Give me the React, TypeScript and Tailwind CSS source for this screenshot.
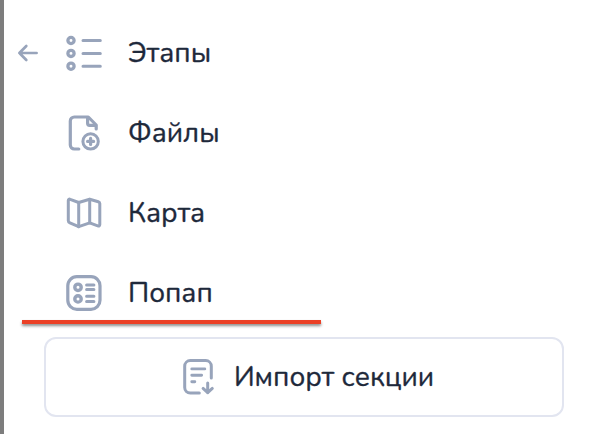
import type { ReactNode } from 'react';

// Outline icon wrapper, 40x40 grid
function Icon({ children }: { children: ReactNode }) {
  return (
    <svg
      viewBox="0 0 40 40"
      className="h-10 w-10 shrink-0 text-[#98a4bb]"
      fill="none"
      stroke="currentColor"
      strokeWidth="3.2"
      strokeLinecap="round"
      strokeLinejoin="round"
    >
      {children}
    </svg>
  );
}

const StepsIcon = () => (
  <Icon>
    <circle cx="7" cy="7.5" r="3.1" strokeWidth="3.3" />
    <circle cx="7" cy="20.4" r="3.1" strokeWidth="3.3" />
    <circle cx="7" cy="33.2" r="3.1" strokeWidth="3.3" />
    <path d="M19 7.5h17.3M19 20.4h17.3M19 33.2h17.3" strokeWidth="3" />
  </Icon>
);

const FileIcon = () => (
  <Icon>
    <path d="M14.8 36H10.3a4 4 0 0 1-4-4V8a4 4 0 0 1 4-4h14L32.2 12v4" />
    <path d="M23.6 4.5v5.8a2 2 0 0 0 2 2h6" />
    <circle cx="26.6" cy="28.4" r="7.7" strokeWidth="3" />
    <path d="M26.6 25.4v6M23.6 28.4h6" />
  </Icon>
);

const MapIcon = () => (
  <Icon>
    <path
      d="M4.3 7.4c0-1.2.9-1.6 1.9-1.1l8.5 3.2 11-3.2 8.6 2.5c1 .3 1.5.8 1.5 1.8v21c0 1.3-.9 1.7-2 1.3l-8.1-3-11 3.8-8.8-3.9c-1-.4-1.6-1-1.6-2z"
      strokeWidth="3"
    />
    <path d="M14.7 9.5v24.2M25.7 6.3v23.6" strokeWidth="3" />
  </Icon>
);

const PopupIcon = () => (
  <Icon>
    <rect x="3.8" y="3.7" width="32.2" height="32.6" rx="9" />
    <circle cx="14" cy="14.3" r="3.2" strokeWidth="3.4" />
    <circle cx="14" cy="25.9" r="3.2" strokeWidth="3.4" />
    <path d="M22.6 11.9h7.3M22.6 16.6h7.3M22.6 23.3h7.3M22.6 28.4h7.3" strokeWidth="3" />
  </Icon>
);

const ImportIcon = () => (
  <Icon>
    <path d="M21.3 36h-9a5.6 5.6 0 0 1-5.6-5.6V9.2a5.6 5.6 0 0 1 5.6-5.6h15.4a5.6 5.6 0 0 1 5.6 5.6v11.9" strokeWidth="3" />
    <path d="M13.8 11.9h13M13.8 18.2h9.8M13.8 24.7h3" strokeWidth="2.9" />
    <path d="M29.7 26v9.7M25.1 31.4l4.6 4.3 4.6-4.3" strokeWidth="3" />
  </Icon>
);

const sections = [
  { label: 'Этапы', icon: <StepsIcon /> },
  { label: 'Файлы', icon: <FileIcon /> },
  { label: 'Карта', icon: <MapIcon /> },
  { label: 'Попап', icon: <PopupIcon /> },
];

export default function App() {
  return (
    <div className="relative h-[434px] w-[604px] overflow-hidden border-l-4 border-[#7d7d7d] bg-white font-['Nunito','Noto_Sans',sans-serif] text-[28px] leading-10 text-[#1e293b] [-webkit-text-stroke:0.35px]">
      <div className="flex pt-[13px]">
        <button className="flex h-20 w-[60px] shrink-0 items-center pl-3" aria-label="Назад">
          <svg
            viewBox="0 0 24 24"
            className="h-6 w-6 text-[#98a4bb]"
            fill="none"
            stroke="currentColor"
            strokeWidth="2.7"
            strokeLinecap="round"
            strokeLinejoin="round"
          >
            <path d="M20.6 12H3.4M10.3 5L3.4 12l6.9 7" />
          </svg>
        </button>

        <ul>
          {sections.map(({ label, icon }) => (
            <li key={label} className="flex h-20 items-center gap-6">
              {icon}
              <span>{label}</span>
            </li>
          ))}
        </ul>
      </div>

      <button className="ml-10 mt-[4px] flex h-20 w-[520px] items-center justify-center gap-4 rounded-xl border-2 border-[#e2e5f0] pl-1">
        <ImportIcon />
        <span className="whitespace-nowrap">Импорт секции</span>
      </button>

      {/* Подчёркивание последнего пункта */}
      <div className="absolute left-[18px] top-80 h-1 w-[299px] bg-[#eb4026] shadow-[0_2px_3px_rgba(0,0,0,0.45)]" />
    </div>
  );
}
